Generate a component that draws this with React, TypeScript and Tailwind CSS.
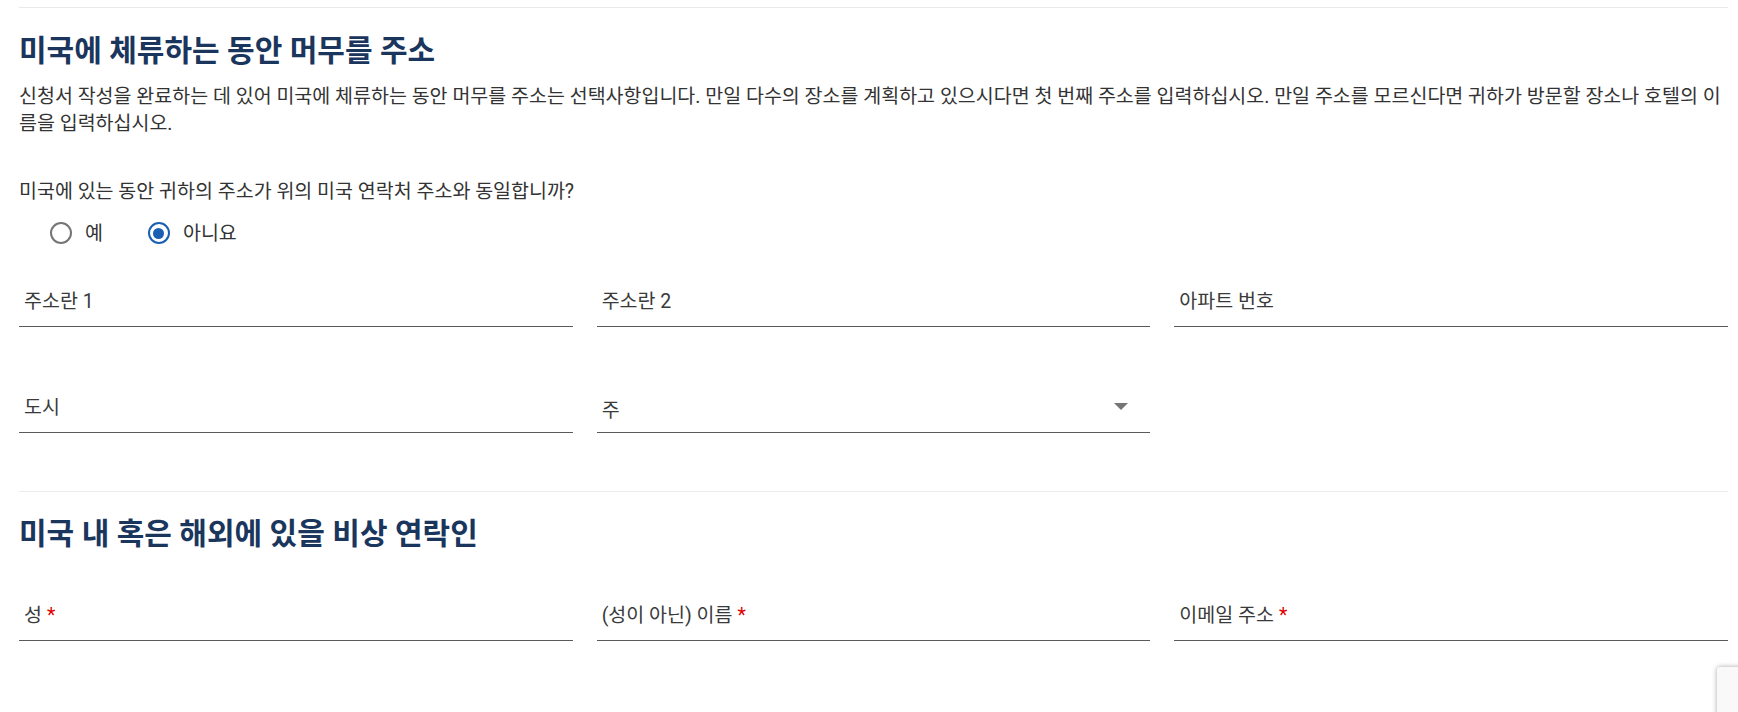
import React from "react";

const font = "font-['Roboto','Noto_Sans_CJK_KR',sans-serif]";

function Field({ label, required, select }: { label: string; required?: boolean; select?: boolean }) {
  return (
    <div className="flex h-[56px] items-end border-b border-[#5a5a5a]">
      <div className="flex w-full items-center justify-between pb-[11px] pl-[5px] pr-[22px]">
        <span className={`text-[19.5px] leading-[27px] text-[#3a3a3a] ${select ? "translate-y-[3px]" : ""}`}>
          {label}
          {required && <span className="ml-[5px] text-[#e00000]">*</span>}
        </span>
        {select && (
          <svg width="14" height="7" viewBox="0 0 14 7" className="-translate-y-[1px]">
            <path d="M0 0 L14 0 L7 7 Z" fill="#757575" />
          </svg>
        )}
      </div>
    </div>
  );
}

function Radio({ checked, label }: { checked?: boolean; label: string }) {
  return (
    <div className="flex items-center gap-[13px]">
      <span
        className={`flex h-[22px] w-[22px] items-center justify-center rounded-full border-[2.5px] ${
          checked ? "border-[#1a5fb4]" : "border-[#757575]"
        }`}
      >
        {checked && <span className="h-[11px] w-[11px] rounded-full bg-[#1a5fb4]" />}
      </span>
      <span className="text-[19.5px] leading-[27px] text-[#333]">{label}</span>
    </div>
  );
}

export default function App() {
  return (
    <div className={`${font} relative h-[712px] w-full overflow-hidden bg-white pl-[19px] pr-[10px]`}>
      <div className="pt-[7px]">
        <div className="border-t border-[#e8e8e8]" />
      </div>
      <h1 className="mt-[25px] text-[30px] font-bold leading-[36px] text-[#1b365d]">미국에 체류하는 동안 머무를 주소</h1>
      <p className="mt-[15px] text-[19.5px] leading-[26.5px] text-[#333]">
        신청서 작성을 완료하는 데 있어 미국에 체류하는 동안 머무를 주소는 선택사항입니다. 만일 다수의 장소를 계획하고 있으시다면 첫 번째 주소를 입력하십시오. 만일 주소를 모르신다면 귀하가 방문할 장소나 호텔의 이름을 입력하십시오.
      </p>
      <p className="mt-[41px] text-[19.5px] leading-[27px] text-[#333]">미국에 있는 동안 귀하의 주소가 위의 미국 연락처 주소와 동일합니까?</p>
      <div className="mt-[8px] flex h-[40px] items-center gap-[45px] pl-[31px]">
        <Radio label="예" />
        <Radio label="아니요" checked />
      </div>
      <div className="mt-[18px] grid grid-cols-3 gap-x-[24px]">
        <Field label="주소란 1" />
        <Field label="주소란 2" />
        <Field label="아파트 번호" />
      </div>
      <div className="mt-[50px] grid grid-cols-3 gap-x-[24px]">
        <Field label="도시" />
        <Field label="주" select />
        <div />
      </div>
      <div className="mt-[58px] border-t border-[#ececec]" />
      <h2 className="mt-[24px] text-[30px] font-bold leading-[36px] text-[#1b365d]">미국 내 혹은 해외에 있을 비상 연락인</h2>
      <div className="mt-[33px] grid grid-cols-3 gap-x-[24px]">
        <Field label="성" required />
        <Field label="(성이 아닌) 이름" required />
        <Field label="이메일 주소" required />
      </div>
      <div className="absolute left-[1717px] top-[667px] h-[60px] w-[256px] rounded-[3px] bg-[#f9f9f9] shadow-[0_0_5px_rgba(0,0,0,0.35)]" />
    </div>
  );
}
